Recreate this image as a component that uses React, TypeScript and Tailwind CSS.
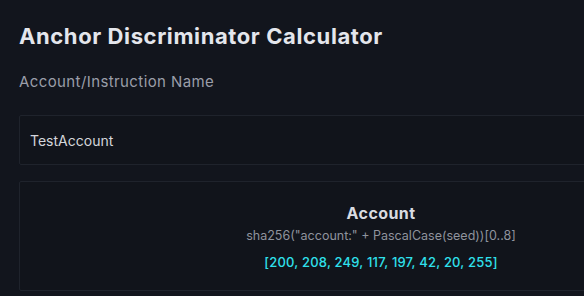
export default function App() {
  const bytes = [200, 208, 249, 117, 197, 42, 20, 255];

  return (
    <div className="min-h-screen w-full overflow-hidden bg-[#12151d]" style={{ fontFamily: "Inter, 'Noto Sans', sans-serif" }}>
      <div className="w-[762px] px-[19px] pt-[22px]">
        {/* Title */}
        <h1 className="text-[22px] font-bold leading-[28px] tracking-[0.6px] text-[#e4e6ec]">
          Anchor Discriminator Calculator
        </h1>

        {/* Input */}
        <label className="mt-[22px] block text-[15px] leading-[20px] tracking-[0.4px] text-[#9a9ea9]">
          Account/Instruction Name
        </label>
        <div className="mt-[23px] flex h-[50px] items-center rounded-[2px] border border-[#1f232c] bg-[#11141b] px-[10px]">
          <span className="text-[14px] text-[#d4d6dc]">TestAccount</span>
        </div>

        {/* Result */}
        <div className="mt-[16px] flex h-[110px] flex-col items-center rounded-[2px] border border-[#1f232c] bg-[#11141b] pt-[20px]">
          <div className="text-[16px] font-bold leading-[22px] tracking-[0.4px] text-[#d9dbe1]">Account</div>
          <div className="mt-[3px] text-[12.5px] leading-[18px] text-[#8f939d]">
            sha256("account:" + PascalCase(seed))[0..8]
          </div>
          <div className="mt-[8px] text-[13px] font-medium leading-[18px] tracking-[0.2px] text-[#2fe0ec]">
            [{bytes.join(", ")}]
          </div>
        </div>
      </div>
    </div>
  );
}
